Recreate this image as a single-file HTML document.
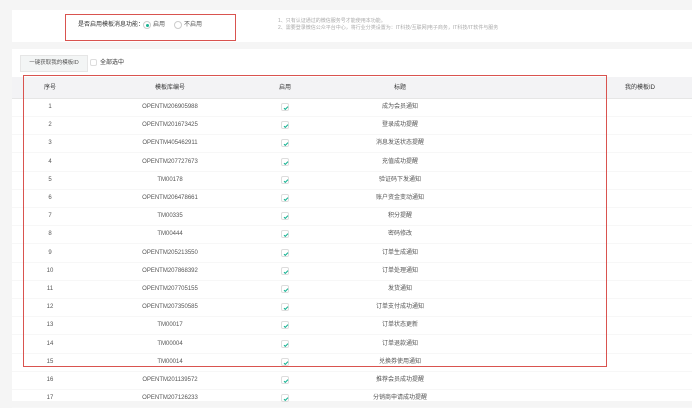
<!DOCTYPE html>
<html><head><meta charset="utf-8"><style>
*{margin:0;padding:0;box-sizing:border-box}
body{width:692px;height:401px;overflow:hidden;background:#f5f5f5;font-family:"Liberation Sans","Noto Sans CJK SC",sans-serif;font-size:6px;line-height:8px;color:#555;position:relative}
.p{position:absolute;background:#fff}
.a{position:absolute;white-space:nowrap;line-height:8px}
.c{position:absolute;transform:translateX(-50%);white-space:nowrap;line-height:8px;height:8px}
.chk{position:absolute;width:8px;height:8px;border:1px solid #ddd;border-radius:2px;background:#fff}
.chk svg{position:absolute;left:0;top:0}
.row{position:absolute;left:12px;width:680px;height:18px;border-bottom:1px solid #f7f7f7}
</style></head><body>
<div class="p" style="left:12px;top:10px;width:680px;height:32px"></div>
<div class="p" style="left:12px;top:49px;width:680px;height:352px"></div>
<div class="a" style="left:78px;top:21px;color:#333">是否启用模板消息功能：</div>
<div class="a" style="left:143px;top:21px;width:8px;height:8px;border:1px solid #ccc;border-radius:50%"><div style="position:absolute;left:1.5px;top:1.5px;width:3px;height:3px;border-radius:50%;background:#1ab394"></div></div>
<div class="a" style="left:153px;top:21px">启用</div>
<div class="a" style="left:174px;top:21px;width:8px;height:8px;border:1px solid #ccc;border-radius:50%"></div>
<div class="a" style="left:184px;top:21px">不启用</div>
<div class="a" style="left:278px;top:18px;color:#aaa;font-size:5px;line-height:7px">1、只有认证通过的微信服务号才能使用本功能。<br>2、需要登录微信公众平台中心，将行业分类设置为：IT科技/互联网|电子商务，IT科技/IT软件与服务</div>
<div class="a" style="left:65px;top:14px;width:171px;height:27px;border:1.5px solid #d9534f"></div>
<div class="a" style="left:20px;top:55px;width:68px;height:17px;background:#f3f5f5;border:1px solid #e6e6e6;color:#555;font-size:5.5px;line-height:15px;text-align:center">一键获取我的模板ID</div>
<div class="chk" style="left:90px;top:59px;width:7px;height:7px"></div>
<div class="a" style="left:100px;top:59px;color:#333">全部选中</div>
<div class="a" style="left:12px;top:77px;width:680px;height:22px;background:#f3f3f5;border-bottom:1px solid #e6e6e6"></div>
<div class="c" style="left:50px;top:84px;color:#333">序号</div>
<div class="c" style="left:170px;top:84px;color:#333">模板库编号</div>
<div class="c" style="left:285px;top:84px;color:#333">启用</div>
<div class="c" style="left:400px;top:84px;color:#333">标题</div>
<div class="c" style="left:640px;top:84px;color:#333">我的模板ID</div>
<div id="rows"></div>
<div class="a" style="left:23px;top:75px;width:584px;height:292px;border:1.5px solid #d9534f"></div>
<script>
var d=[["OPENTM206905988","成为会员通知"],["OPENTM201673425","登录成功提醒"],["OPENTM405462911","消息发送状态提醒"],["OPENTM207727673","充值成功提醒"],["TM00178","验证码下发通知"],["OPENTM206478661","账户资金变动通知"],["TM00335","积分提醒"],["TM00444","密码修改"],["OPENTM205213550","订单生成通知"],["OPENTM207868392","订单处理通知"],["OPENTM207705155","发货通知"],["OPENTM207350585","订单支付成功通知"],["TM00017","订单状态更新"],["TM00004","订单退款通知"],["TM00014","兑换券使用通知"],["OPENTM201139572","推荐会员成功提醒"],["OPENTM207126233","分销商申请成功提醒"]];
var h="";
for(var i=0;i<d.length;i++){var y=99+i*18.2;
h+='<div class="row" style="top:'+y+'px"></div>';
h+='<div class="c" style="left:50px;top:'+(y+4)+'px">'+(i+1)+'</div>';
h+='<div class="c" style="left:170px;top:'+(y+4)+'px">'+d[i][0]+'</div>';
h+='<div class="chk" style="left:281px;top:'+(y+4)+'px"><svg width="8" height="8" viewBox="0 0 8 8"><path d="M2 4.2L3.3 5.4L6 2.6" stroke="#1ab394" stroke-width="1.1" fill="none"/></svg></div>';
h+='<div class="c" style="left:400px;top:'+(y+4)+'px">'+d[i][1]+'</div>';}
document.getElementById("rows").innerHTML=h;
</script>
</body></html>
